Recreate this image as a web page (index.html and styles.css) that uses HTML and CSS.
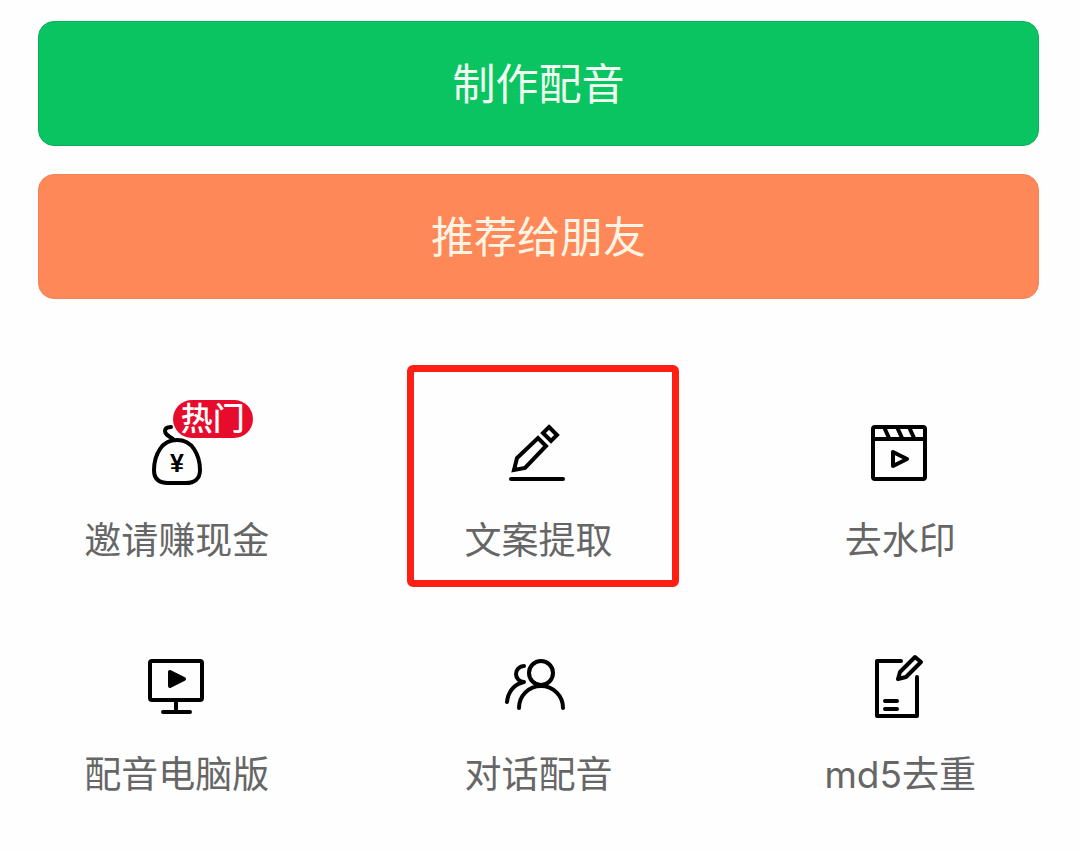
FILE: index.html
```
<!DOCTYPE html>
<html lang="zh-CN">

<head>
    <meta charset="UTF-8">
    <meta name="viewport" content="width=device-width, initial-scale=1.0">
    <title>配音</title>
    <link rel="stylesheet" href="styles.css">
</head>

<body>
    <main class="container">
        <div class="actions">
            <button type="button" class="btn btn-make">制作配音</button>
            <button type="button" class="btn btn-share">推荐给朋友</button>
        </div>

        <nav class="tools">
            <a href="#invite" class="tool">
                <span class="icon">
                    <svg viewBox="0 0 70 70">
                        <path d="M31 20C26 17 23 15 23 12C23 9 26 8 29 8" />
                        <path d="M35 21C42 21 48 24 52 30C56 36 58 43 58 51C58 60 52 64 44 64H26C17 64 12 60 12 51C12 43 14 36 18 30C22 24 28 21 35 21Z" />
                        <text x="35" y="53" class="yen">¥</text>
                    </svg>
                    <span class="badge">热门</span>
                </span>
                <span class="label">邀请赚现金</span>
            </a>
            <a href="#extract" class="tool marked">
                <span class="icon">
                    <svg viewBox="0 0 70 70">
                        <g class="sharp">
                            <path d="M11 51L14 39L35 19L43 27L22 49Z" />
                            <path d="M46 8L54 16L48 22L40 14Z" />
                        </g>
                        <path d="M8 60H60" />
                    </svg>
                </span>
                <span class="label">文案提取</span>
            </a>
            <a href="#watermark" class="tool">
                <span class="icon">
                    <svg viewBox="0 0 70 70">
                        <rect x="8" y="8" width="52" height="52" rx="2" />
                        <path d="M8 20H60M19 8L24 19M32 8L37 19M44 8L49 19" />
                        <path d="M28 33V47L42 40Z" />
                    </svg>
                </span>
                <span class="label">去水印</span>
            </a>
            <a href="#desktop" class="tool">
                <span class="icon">
                    <svg viewBox="0 0 70 70">
                        <rect x="8" y="8" width="52" height="39" rx="2" />
                        <path d="M34 47V59M21 59H48" />
                        <path class="solid" d="M28 19V33L42 26Z" />
                    </svg>
                </span>
                <span class="label">配音电脑版</span>
            </a>
            <a href="#dialog" class="tool">
                <span class="icon">
                    <svg viewBox="0 0 70 70">
                        <circle cx="38" cy="20" r="12" />
                        <path d="M16 55A22 22 0 0 1 60 55" />
                        <path d="M21 13A8 8 0 0 0 21 29C11 31 5 39 4 49" />
                    </svg>
                </span>
                <span class="label">对话配音</span>
            </a>
            <a href="#md5" class="tool">
                <span class="icon">
                    <svg viewBox="0 0 70 70">
                        <path d="M36 8H12V63H52V24" />
                        <path d="M33 26L35 19L50 4L56 9L41 24Z" />
                        <path d="M20 48H32M20 56H32" />
                    </svg>
                </span>
                <span class="label">md5去重</span>
            </a>
        </nav>
    </main>
</body>

</html>
```
FILE: styles.css
```
* {
    box-sizing: border-box;
}

body {
    margin: 0;
    background-color: #fefefe;
    font-family: Inter, "Noto Sans CJK SC", sans-serif;
}

.container {
    padding: 21px 41px 48px 38px;
}

.actions {
    display: flex;
    flex-direction: column;
    gap: 28px;
}

.btn {
    width: 100%;
    height: 125px;
    padding: 0;
    border: 1px solid #09b058;
    border-radius: 16px;
    background-color: #09c461;
    color: #f0fff0;
    font-family: inherit;
    font-size: 43px;
    line-height: 60px;
    cursor: pointer;
}

.btn-share {
    border-color: #f08658;
    background-color: #ff8858;
    color: #fff4e4;
}

.tools {
    display: grid;
    grid-template-columns: repeat(3, 1fr);
    column-gap: 84px;
    row-gap: 86px;
    margin-top: 120px;
}

.tool {
    position: relative;
    display: flex;
    flex-direction: column;
    align-items: center;
    gap: 26px;
    color: #666;
    text-decoration: none;
}

.icon {
    position: relative;
    width: 70px;
    height: 70px;
}

.icon svg {
    display: block;
    fill: none;
    stroke: #000;
    stroke-width: 4;
    stroke-linecap: round;
    stroke-linejoin: round;
}

.icon .sharp {
    stroke-linejoin: miter;
}

.icon .solid {
    fill: #000;
}

.icon .yen {
    fill: #000;
    stroke: none;
    font-family: "Liberation Sans", sans-serif;
    font-size: 25px;
    font-weight: 700;
    text-anchor: middle;
}

.label {
    font-size: 37px;
    line-height: 52px;
    white-space: nowrap;
}

.badge {
    position: absolute;
    top: -19px;
    left: 31px;
    padding: 0 8px;
    border-radius: 19px;
    background-color: #e80c2c;
    color: #fff;
    font-size: 32px;
    font-weight: 500;
    line-height: 38px;
    white-space: nowrap;
}

/* red frame round the current tool */
.marked::after {
    content: "";
    position: absolute;
    top: -54px;
    right: -2px;
    bottom: -20px;
    left: 7px;
    border: 7px solid #fc2014;
    border-radius: 6px;
}
```
